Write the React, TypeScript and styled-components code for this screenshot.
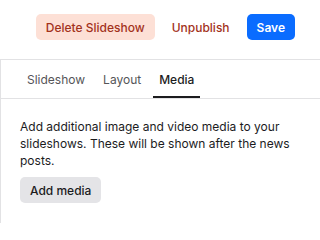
import React from "react";
import styled, { createGlobalStyle } from "styled-components";

const Global = createGlobalStyle`
  html, body { margin: 0; padding: 0; background: #ffffff; }
  body { font-family: Inter, "Noto Sans", sans-serif; color: #1c1c1e; -webkit-font-smoothing: antialiased; }
  * { box-sizing: border-box; }
`;

const Header = styled.div`
  display: flex;
  justify-content: flex-end;
  align-items: center;
  gap: 7px;
  padding: 14px 25px 0 0;
`;

const Button = styled.button<{ $variant: "danger" | "ghost" | "primary" | "secondary" }>`
  height: 26px;
  padding: 0 10px;
  border: none;
  border-radius: 5px;
  font-family: inherit;
  font-size: 12px;
  font-weight: ${(p) => (p.$variant === "primary" ? 600 : 500)};
  cursor: pointer;
  background: ${(p) =>
    p.$variant === "danger"
      ? "#fde0d6"
      : p.$variant === "primary"
      ? "#0a6cff"
      : p.$variant === "secondary"
      ? "#e4e4e7"
      : "transparent"};
  color: ${(p) =>
    p.$variant === "primary"
      ? "#ffffff"
      : p.$variant === "secondary"
      ? "#1c1c1e"
      : "#a3321c"};
`;

const Panel = styled.div`
  margin-top: 19px;
  border-top: 1px solid #e2e2e4;
  border-left: 1px solid #e2e2e4;
`;

const TabList = styled.div`
  display: flex;
  gap: 6px;
  padding-left: 20px;
  border-bottom: 1px solid #e2e2e4;
`;

const Tab = styled.button<{ $active?: boolean }>`
  height: 38px;
  padding: 2px 6px 0;
  border: none;
  background: transparent;
  font-family: inherit;
  font-size: 12px;
  font-weight: ${(p) => (p.$active ? 500 : 400)};
  color: ${(p) => (p.$active ? "#1c1c1e" : "#555558")};
  border-bottom: 2px solid ${(p) => (p.$active ? "#1c1c1e" : "transparent")};
  cursor: pointer;
`;

const Body = styled.div`
  padding: 19px 20px 20px 19px;
`;

const Description = styled.p`
  margin: 0 0 8px;
  font-size: 12px;
  line-height: 17px;
  color: #1c1c1e;
`;

export default function App() {
  return (
    <>
      <Global />
      <Header>
        <Button $variant="danger">Delete Slideshow</Button>
        <Button $variant="ghost">Unpublish</Button>
        <Button $variant="primary">Save</Button>
      </Header>
      <Panel>
        <TabList>
          <Tab>Slideshow</Tab>
          <Tab>Layout</Tab>
          <Tab $active>Media</Tab>
        </TabList>
        <Body>
          <Description>
            Add additional image and video media to your slideshows. These will be shown after the news posts.
          </Description>
          <Button $variant="secondary">Add media</Button>
        </Body>
      </Panel>
    </>
  );
}
